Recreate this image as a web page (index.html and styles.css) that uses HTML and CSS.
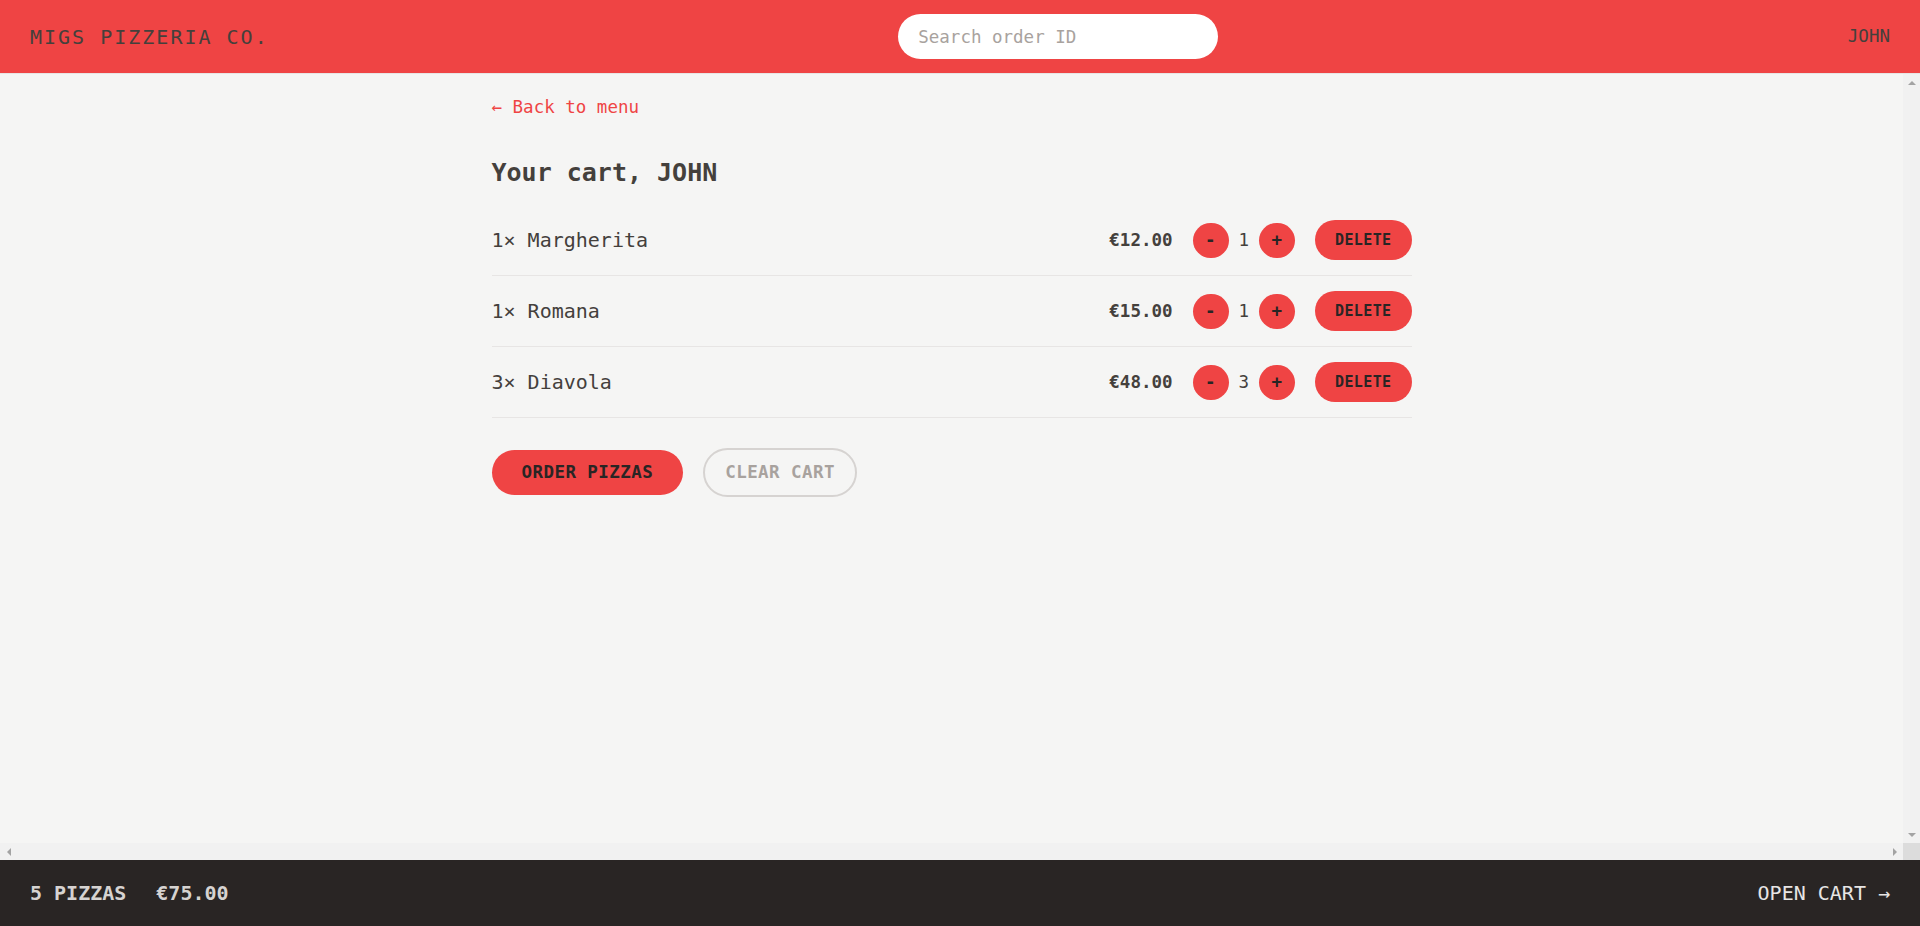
FILE: index.html
```html
<!DOCTYPE html>
<html lang="en">
<head>
<meta charset="utf-8">
<title>Migs Pizzeria Co.</title>
<link rel="stylesheet" href="styles.css">
</head>
<body>
<div class="app">
  <header class="header">
    <a class="logo" href="#">Migs Pizzeria Co.</a>
    <form class="search">
      <input class="search-input" type="text" placeholder="Search order ID">
    </form>
    <div class="username">John</div>
  </header>

  <div class="scroll-frame">
    <div class="scroller">
      <main class="main">
        <div class="cart">
          <div class="back-row"><a class="back-link" href="#">&larr; Back to menu</a></div>
          <h2 class="cart-title">Your cart, JOHN</h2>
          <ul class="cart-list">
            <li class="cart-item">
              <p class="item-name">1&times; Margherita</p>
              <div class="item-actions">
                <p class="item-price">€12.00</p>
                <div class="qty">
                  <button class="btn btn-round">-</button>
                  <span class="qty-value">1</span>
                  <button class="btn btn-round">+</button>
                </div>
                <button class="btn btn-small">Delete</button>
              </div>
            </li>
            <li class="cart-item">
              <p class="item-name">1&times; Romana</p>
              <div class="item-actions">
                <p class="item-price">€15.00</p>
                <div class="qty">
                  <button class="btn btn-round">-</button>
                  <span class="qty-value">1</span>
                  <button class="btn btn-round">+</button>
                </div>
                <button class="btn btn-small">Delete</button>
              </div>
            </li>
            <li class="cart-item">
              <p class="item-name">3&times; Diavola</p>
              <div class="item-actions">
                <p class="item-price">€48.00</p>
                <div class="qty">
                  <button class="btn btn-round">-</button>
                  <span class="qty-value">3</span>
                  <button class="btn btn-round">+</button>
                </div>
                <button class="btn btn-small">Delete</button>
              </div>
            </li>
          </ul>
          <div class="cart-buttons">
            <a class="btn btn-primary" href="#">Order pizzas</a>
            <button class="btn btn-secondary">Clear cart</button>
          </div>
        </div>
      </main>
    </div>
    <div class="vbar">
      <span class="sb-btn"><span class="arrow arrow-up"></span></span>
      <span class="sb-btn"><span class="arrow arrow-down"></span></span>
    </div>
    <div class="hbar">
      <span class="sb-btn"><span class="arrow arrow-left"></span></span>
      <span class="sb-btn"><span class="arrow arrow-right"></span></span>
    </div>
    <div class="sb-corner"></div>
  </div>

  <footer class="overview">
    <p class="overview-stats">
      <span>5 pizzas</span>
      <span>€75.00</span>
    </p>
    <a class="overview-link" href="#">Open cart &rarr;</a>
  </footer>
</div>
</body>
</html>
```

FILE: styles.css
```css
* {
  box-sizing: border-box;
}

html, body {
  margin: 0;
  padding: 0;
}

body {
  font-family: "DejaVu Sans Mono", "Liberation Mono", monospace;
  font-size: 20px;
  line-height: 30px;
  background: #f5f5f4;
  color: #44403c;
}

a {
  text-decoration: none;
  color: inherit;
}

p, ul, h2 {
  margin: 0;
  padding: 0;
}

.app {
  display: grid;
  grid-template-rows: auto minmax(0, 1fr) auto;
  height: 100vh;
}

/* Header */
.header {
  display: flex;
  align-items: center;
  justify-content: space-between;
  background: #ef4444;
  border-bottom: 1px solid #e7e5e4;
  padding: 14px 30px;
  text-transform: uppercase;
}

.logo {
  letter-spacing: 0.1em;
  font-size: 20px;
  line-height: 30px;
}

.search {
  margin: 0;
}

.search-input {
  display: block;
  width: 320px;
  border: none;
  border-radius: 9999px;
  background: #ffffff;
  padding: 10px 20px;
  font-family: inherit;
  font-size: 17.5px;
  line-height: 25px;
  height: 45px;
  color: #44403c;
  outline: none;
}

.search-input::placeholder {
  color: #a8a29e;
}

.username {
  font-size: 17.5px;
  line-height: 25px;
  font-weight: 400;
}

/* Scroll area with classic scrollbars */
.scroll-frame {
  display: grid;
  grid-template-columns: minmax(0, 1fr) 17px;
  grid-template-rows: minmax(0, 1fr) 17px;
  min-height: 0;
}

.scroller {
  overflow: hidden;
  min-height: 0;
}

.vbar {
  display: flex;
  flex-direction: column;
  justify-content: space-between;
  background: #f1f1f1;
}

.hbar {
  display: flex;
  justify-content: space-between;
  background: #f1f1f1;
}

.sb-corner {
  background: #dcdcdc;
}

.sb-btn {
  width: 17px;
  height: 17px;
  display: flex;
  align-items: center;
  justify-content: center;
}

.arrow {
  width: 0;
  height: 0;
}

.arrow-up {
  border-left: 4px solid transparent;
  border-right: 4px solid transparent;
  border-bottom: 4px solid #a3a3a3;
}

.arrow-down {
  border-left: 4px solid transparent;
  border-right: 4px solid transparent;
  border-top: 4px solid #a3a3a3;
}

.arrow-left {
  border-top: 4px solid transparent;
  border-bottom: 4px solid transparent;
  border-right: 4px solid #a3a3a3;
}

.arrow-right {
  border-top: 4px solid transparent;
  border-bottom: 4px solid transparent;
  border-left: 4px solid #a3a3a3;
}

.main {
  max-width: 960px;
  margin: 0 auto;
}

.cart {
  padding: 15px 20px;
}

.back-row {
  padding-top: 2px;
  margin-bottom: -2px;
}

.back-link {
  font-size: 17.5px;
  color: #ef4444;
}

.cart-title {
  margin-top: 35px;
  font-size: 25px;
  line-height: 35px;
  font-weight: 600;
}

.cart-list {
  list-style: none;
  margin-top: 15px;
}

.cart-item {
  display: flex;
  align-items: center;
  justify-content: space-between;
  padding: 15px 0;
  border-bottom: 1px solid #e7e5e4;
}

.item-actions {
  display: flex;
  align-items: center;
  gap: 20px;
}

.item-price {
  font-size: 17.5px;
  line-height: 25px;
  font-weight: 700;
}

.qty {
  display: flex;
  align-items: center;
  gap: 10px;
}

.qty-value {
  font-size: 17.5px;
  line-height: 25px;
  font-weight: 500;
}

/* Buttons */
.btn {
  display: inline-block;
  border: none;
  margin: 0;
  font-family: inherit;
  font-size: 17.5px;
  line-height: 25px;
  border-radius: 9999px;
  background: #ef4444;
  font-weight: 600;
  text-transform: uppercase;
  letter-spacing: 0.025em;
  color: #292524;
  cursor: pointer;
}

.btn-round {
  padding: 5px 12.5px;
}

.btn-small {
  padding: 10px 20px;
  font-size: 15px;
  line-height: 20px;
}

.cart-buttons {
  margin-top: 30px;
  display: flex;
  align-items: center;
  gap: 20px;
}

.btn-primary {
  padding: 10px 30px;
}

.btn-secondary {
  background: transparent;
  border: 2px solid #d6d3d1;
  color: #a8a29e;
  padding: 10px 20px;
}

/* Footer */
.overview {
  display: flex;
  align-items: center;
  justify-content: space-between;
  background: #292524;
  padding: 18px 30px;
  text-transform: uppercase;
  color: #e7e5e4;
  font-size: 20px;
  line-height: 30px;
}

.overview-stats {
  display: flex;
  gap: 30px;
  font-weight: 600;
  color: #d6d3d1;
}
```
